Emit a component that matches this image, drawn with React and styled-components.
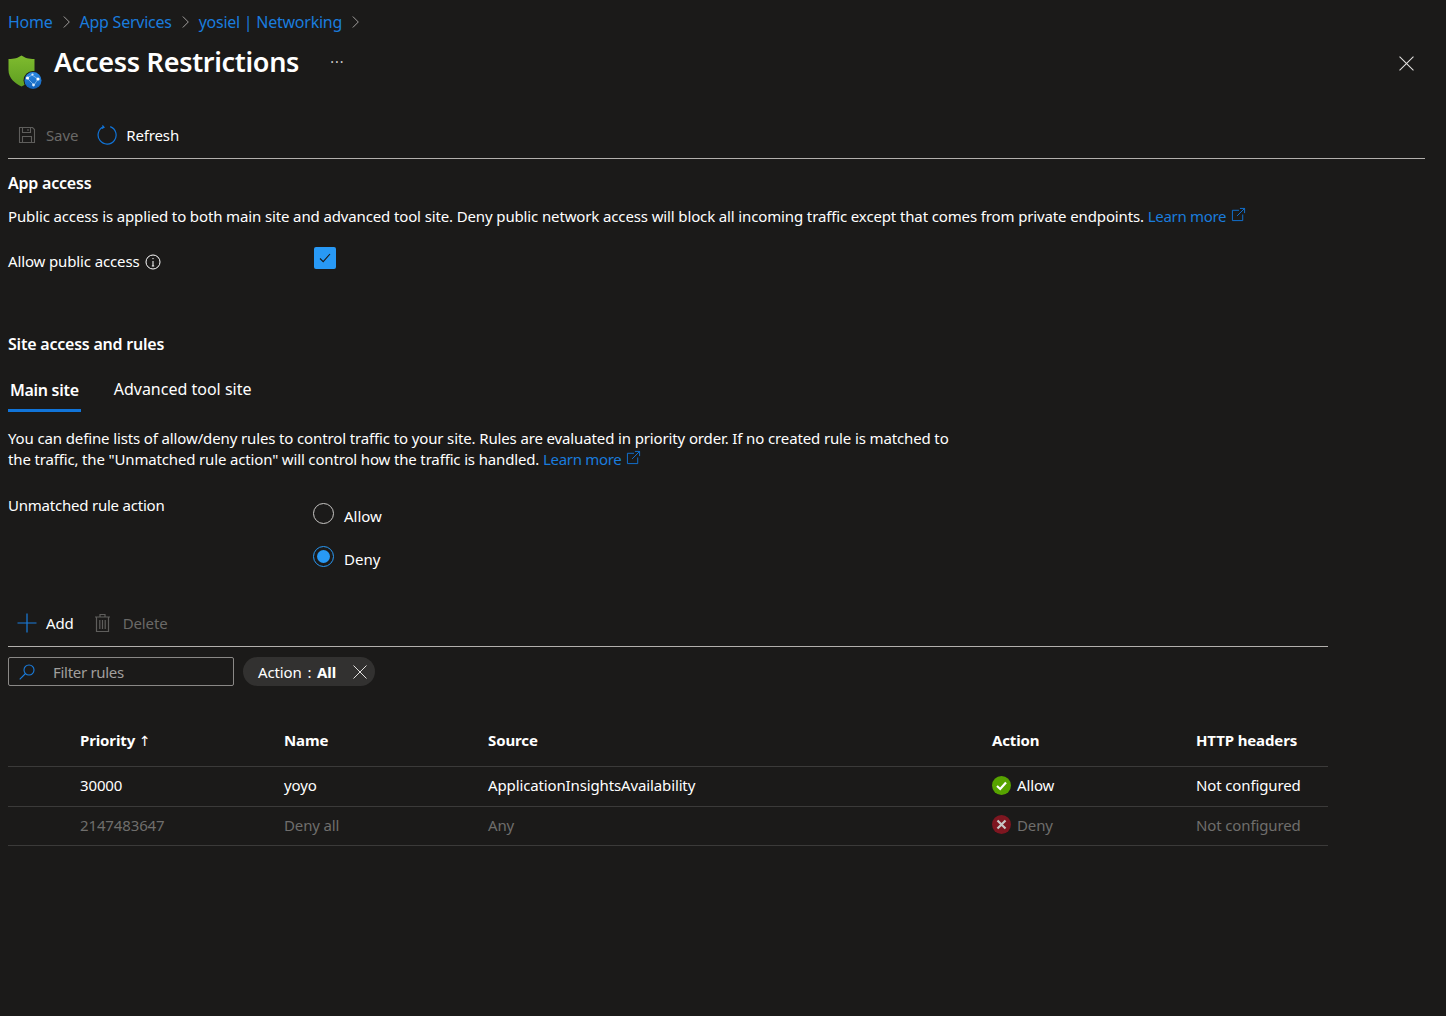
import React from "react";
import styled, { createGlobalStyle } from "styled-components";

const Global = createGlobalStyle`
  html, body { margin: 0; padding: 0; background: #1b1a19; }
  body {
    color: #fff;
    font-family: "Noto Sans", "Open Sans", sans-serif;
    font-size: 15px;
    letter-spacing: -0.13px;
  }
  #root { min-height: 100vh; }
`;

const ExternalIcon = () => (
  <LinkGlyph viewBox="0 0 16 16" fill="none" stroke="#1174d8" strokeWidth="1">
    <path d="M8.5 3.5H1.5v11h11V8" />
    <path d="M6.5 9.5L14.5 1.5M9.5 1.5h5v5" />
  </LinkGlyph>
);

const Chevron = () => (
  <svg width="7" height="14" viewBox="0 0 7 14" fill="none" stroke="#a19f9d" strokeWidth="1">
    <path d="M0.8 1.5L6.3 7L0.8 12.5" />
  </svg>
);

const ShieldLogo = () => (
  <svg width="36" height="36" viewBox="0 0 36 36">
    <defs>
      <linearGradient id="shield" x1="0" y1="0" x2="0" y2="1">
        <stop offset="0" stopColor="#7fbb2e" />
        <stop offset="1" stopColor="#5f9f22" />
      </linearGradient>
      <linearGradient id="globe" x1="0" y1="0" x2="0" y2="1">
        <stop offset="0" stopColor="#2b8be6" />
        <stop offset="1" stopColor="#1260b8" />
      </linearGradient>
    </defs>
    <path d="M13.5 0.5C17 3 20.5 4 26.5 4V15C26.5 23 20 28.5 13.5 31.5C7 28.5 0.5 23 0.5 15V4C6.5 4 10 3 13.5 0.5Z" fill="url(#shield)" />
    <circle cx="25" cy="25.5" r="9.5" fill="#1b1a19" />
    <circle cx="25" cy="25.5" r="8.5" fill="url(#globe)" />
    <path d="M19 23L24 20M24 20L30 24M19 23L26 30M30 24L26 30" stroke="#9ccbf5" strokeWidth="0.7" fill="none" />
    <circle cx="19.5" cy="23" r="1.6" fill="#fff" />
    <circle cx="30" cy="24" r="1.6" fill="#fff" />
    <circle cx="25.5" cy="30" r="1.4" fill="#dcecfb" />
    <circle cx="24.5" cy="19.5" r="1.1" fill="#dcecfb" />
  </svg>
);

const SaveIcon = () => (
  <svg width="18" height="18" viewBox="0 0 18 18" fill="none" stroke="#5f5e5c" strokeWidth="1.1">
    <path d="M1.5 1.5H14.5L16.5 3.5V16.5H1.5Z" />
    <path d="M4.5 1.5V6.5H12.5V1.5M10 3V5M4.5 16.5V10.5H13.5V16.5" />
  </svg>
);

const RefreshIcon = () => (
  <svg width="20" height="20" viewBox="0 0 20 20" fill="none" stroke="#1174d8" strokeWidth="1.2">
    <path d="M6.5 1.8A9 9 0 1 0 13.2 1.6" />
    <path d="M5.4 0.5L7 2.3L4.8 3.4" />
  </svg>
);

const PlusIcon = () => (
  <svg width="20" height="20" viewBox="0 0 20 20" stroke="#1a7cdd" strokeWidth="1.2">
    <path d="M10 0.5V19.5M0.5 10H19.5" />
  </svg>
);

const TrashIcon = () => (
  <svg width="17" height="20" viewBox="0 0 17 20" fill="none" stroke="#5f5e5c" strokeWidth="1.2">
    <path d="M1 4H16M6 4V1.5H11V4M2.5 4V18.5H14.5V4" />
    <path d="M5.8 7V16M8.5 7V16M11.2 7V16" />
  </svg>
);

const SearchIcon = () => (
  <svg width="16" height="16" viewBox="0 0 16 16" fill="none" stroke="#1a7cdd" strokeWidth="1.1">
    <circle cx="10" cy="6" r="5" />
    <path d="M6.5 9.5L0.7 15.3" />
  </svg>
);

const CloseIcon = ({ size = 14 }) => (
  <svg width={size} height={size} viewBox="0 0 14 14" stroke="#e1dfdd" strokeWidth="1">
    <path d="M0.5 0.5L13.5 13.5M13.5 0.5L0.5 13.5" />
  </svg>
);

const InfoIcon = () => (
  <InfoGlyph viewBox="0 0 16 16" fill="none" stroke="#fff" strokeWidth="1">
    <circle cx="8" cy="8" r="7" />
    <path d="M8 7V12M6.8 12H9.2" />
    <circle cx="8" cy="4.6" r="0.7" fill="#fff" stroke="none" />
  </InfoGlyph>
);

const StatusIcon = ({ allow }) => (
  <svg width="19" height="19" viewBox="0 0 19 19">
    <circle cx="9.5" cy="9.5" r="9.5" fill={allow ? "#57a300" : "#7e1620"} />
    {allow ? (
      <path d="M5 10L8.2 13L14 6.5" fill="none" stroke="#fff" strokeWidth="2.2" />
    ) : (
      <path d="M5.5 5.5L13.5 13.5M13.5 5.5L5.5 13.5" fill="none" stroke="#c9c8c7" strokeWidth="2.2" />
    )}
  </svg>
);

const RULES = [
  { priority: "30000", name: "yoyo", source: "ApplicationInsightsAvailability", action: "Allow", headers: "Not configured" },
  { priority: "2147483647", name: "Deny all", source: "Any", action: "Deny", headers: "Not configured", muted: true },
];

const App = () => {
  return (
    <Page>
      <Global />
      <Breadcrumb>
        <a>Home</a>
        <Chevron />
        <a>App Services</a>
        <Chevron />
        <a>yosiel | Networking</a>
        <Chevron />
      </Breadcrumb>

      <TitleRow>
        <TitleLogo>
          <ShieldLogo />
        </TitleLogo>
        <Title>Access Restrictions</Title>
        <Ellipsis>···</Ellipsis>
        <CloseButton>
          <CloseIcon size={15} />
        </CloseButton>
      </TitleRow>

      <Toolbar $width="1417px" $top="18px" $left="10px" $gap="19px">
        <ToolButton $disabled $gap="10px">
          <SaveIcon />
          Save
        </ToolButton>
        <ToolButton>
          <RefreshIcon />
          Refresh
        </ToolButton>
      </Toolbar>

      <SectionTitle $top="13px">App access</SectionTitle>
      <Paragraph $top="12px">
        Public access is applied to both main site and advanced tool site. Deny public network access will block all
        incoming traffic except that comes from private endpoints. <LearnMore>Learn more</LearnMore>
        <ExternalIcon />
      </Paragraph>

      <FieldRow $top="19px">
        <FieldLabel>
          Allow public access <InfoIcon />
        </FieldLabel>
        <Checkbox>
          <svg width="12" height="10" viewBox="0 0 12 10" fill="none" stroke="#1b1a19" strokeWidth="1.1">
            <path d="M1 5.5L4.2 8.7L11 1" />
          </svg>
        </Checkbox>
      </FieldRow>

      <SectionTitle $top="58px">Site access and rules</SectionTitle>

      <Tabs>
        <Tab $active>Main site</Tab>
        <Tab>Advanced tool site</Tab>
      </Tabs>

      <Paragraph $top="16px" $width="960px">
        You can define lists of allow/deny rules to control traffic to your site. Rules are evaluated in priority order.
        If no created rule is matched to
        <br />
        <TightLine>the traffic, the "Unmatched rule action" will control how the traffic is handled. </TightLine>
        <LearnMore>Learn more</LearnMore>
        <ExternalIcon />
      </Paragraph>

      <RadioField>
        <FieldLabel>Unmatched rule action</FieldLabel>
        <RadioGroup>
          <RadioOption>
            <Radio />
            <span>Allow</span>
          </RadioOption>
          <RadioOption>
            <Radio $checked />
            <span>Deny</span>
          </RadioOption>
        </RadioGroup>
      </RadioField>

      <Toolbar $width="1320px" $top="37px" $left="9px" $gap="20px">
        <ToolButton>
          <PlusIcon />
          Add
        </ToolButton>
        <ToolButton $disabled $gap="12px">
          <TrashIcon />
          Delete
        </ToolButton>
      </Toolbar>

      <FilterRow>
        <FilterInput>
          <SearchIcon />
          <span>Filter rules</span>
        </FilterInput>
        <FilterPill>
          <span>
            Action : <b>All</b>
          </span>
          <CloseIcon />
        </FilterPill>
      </FilterRow>

      <RulesTable>
        <thead>
          <tr>
            <th />
            <th>
              Priority <SortArrow>↑</SortArrow>
            </th>
            <th>Name</th>
            <th>Source</th>
            <th>Action</th>
            <th>HTTP headers</th>
          </tr>
        </thead>
        <tbody>
          {RULES.map((rule) => (
            <RuleRow key={rule.priority} $muted={rule.muted}>
              <td />
              <td>{rule.priority}</td>
              <td>{rule.name}</td>
              <td>{rule.source}</td>
              <td>
                <ActionCell>
                  <StatusIcon allow={rule.action === "Allow"} />
                  {rule.action}
                </ActionCell>
              </td>
              <td>{rule.headers}</td>
            </RuleRow>
          ))}
        </tbody>
      </RulesTable>
    </Page>
  );
};

export default App;

const Page = styled.div`
  box-sizing: border-box;
  width: 1446px;
  min-height: 1016px;
  padding: 12px 0 0 8px;
  background: #1b1a19;
`;

const Breadcrumb = styled.nav`
  display: flex;
  align-items: center;
  gap: 10px;
  height: 20px;
  font-size: 16px;
  letter-spacing: -0.25px;

  a {
    color: #1a7cdd;
  }
`;

const TitleRow = styled.div`
  display: flex;
  align-items: flex-start;
  height: 56px;
  margin-top: 10px;
  width: 1417px;
`;

const TitleLogo = styled.div`
  width: 46px;
  height: 36px;
  margin-top: 13px;
`;

const Title = styled.h1`
  margin: 0;
  font-size: 27px;
  line-height: 40px;
  font-weight: 600;
  letter-spacing: -0.3px;
`;

const Ellipsis = styled.div`
  margin-left: 31px;
  line-height: 40px;
  font-size: 14px;
  letter-spacing: 1px;
  color: #d2d0ce;
`;

const CloseButton = styled.div`
  margin-left: auto;
  padding: 13px 11px 0 0;
`;

const Toolbar = styled.div`
  display: flex;
  align-items: center;
  gap: ${(p) => p.$gap};
  box-sizing: border-box;
  width: ${(p) => p.$width};
  height: 43px;
  margin-top: ${(p) => p.$top};
  padding: 0 0 5px ${(p) => p.$left};
  border-bottom: 1px solid #b3b0ad;
`;

const ToolButton = styled.div`
  display: flex;
  align-items: center;
  gap: ${(p) => p.$gap || "9px"};
  color: ${(p) => (p.$disabled ? "#6a6967" : "#fff")};
`;

const SectionTitle = styled.h2`
  margin: ${(p) => p.$top} 0 0;
  font-size: 16px;
  line-height: 22px;
  font-weight: 600;
  letter-spacing: -0.22px;
`;

const Paragraph = styled.p`
  margin: ${(p) => p.$top} 0 0;
  width: ${(p) => p.$width || "auto"};
  line-height: 21px;
`;

const TightLine = styled.span`
  letter-spacing: -0.155px;
`;

const LearnMore = styled.a`
  color: #1a7cdd;
  letter-spacing: -0.3px;
`;

const LinkGlyph = styled.svg`
  width: 15px;
  height: 15px;
  margin-left: 5px;
  vertical-align: 0;
`;

const InfoGlyph = styled.svg`
  width: 16px;
  height: 16px;
  margin-left: 2px;
  vertical-align: -3px;
`;

const FieldRow = styled.div`
  display: grid;
  grid-template-columns: 306px auto;
  justify-content: start;
  margin-top: ${(p) => p.$top};
`;

const FieldLabel = styled.div`
  line-height: 28px;
  margin-top: 1px;
`;

const Checkbox = styled.div`
  display: flex;
  align-items: center;
  justify-content: center;
  width: 22px;
  height: 22px;
  border-radius: 2px;
  background: #2899f5;
  margin-top: 1px;
`;

const Tabs = styled.div`
  display: flex;
  gap: 35px;
  margin-top: 20px;
  padding-left: 2px;
  height: 37px;
`;

const Tab = styled.div`
  position: relative;
  font-size: 16px;
  line-height: 28px;
  font-weight: ${(p) => (p.$active ? 600 : 400)};
  letter-spacing: ${(p) => (p.$active ? "-0.3px" : "0")};
  padding-top: ${(p) => (p.$active ? "1px" : "0")};

  ${(p) =>
    p.$active &&
    `
    &::after {
      content: "";
      position: absolute;
      left: -2px;
      right: -2px;
      bottom: 0;
      height: 3px;
      background: #1174d8;
    }
  `}
`;

const RadioField = styled.div`
  display: grid;
  grid-template-columns: 305px auto;
  justify-content: start;
  margin-top: 20px;
  letter-spacing: -0.22px;
`;

const RadioGroup = styled.div`
  display: flex;
  flex-direction: column;
  gap: 21px;
  margin-top: 12px;
  letter-spacing: 0;
`;

const RadioOption = styled.div`
  display: flex;
  align-items: center;
  gap: 10px;
  height: 22px;

  span {
    padding-top: 6px;
  }
`;

const Radio = styled.div`
  box-sizing: border-box;
  width: 21px;
  height: 21px;
  border-radius: 50%;
  border: 1px solid ${(p) => (p.$checked ? "#2899f5" : "#c8c6c4")};
  display: flex;
  align-items: center;
  justify-content: center;

  &::after {
    content: "";
    display: ${(p) => (p.$checked ? "block" : "none")};
    width: 13px;
    height: 13px;
    border-radius: 50%;
    background: #2899f5;
  }
`;

const FilterRow = styled.div`
  display: flex;
  align-items: center;
  gap: 9px;
  margin-top: 10px;
`;

const FilterInput = styled.div`
  box-sizing: border-box;
  display: flex;
  align-items: center;
  gap: 18px;
  width: 226px;
  height: 29px;
  padding-left: 10px;
  border: 1px solid #8a8886;
  border-radius: 2px;
  color: #a19f9d;
  letter-spacing: -0.3px;
`;

const FilterPill = styled.div`
  display: flex;
  align-items: center;
  gap: 17px;
  box-sizing: border-box;
  height: 29px;
  padding: 0 8px 0 15px;
  border-radius: 15px;
  background: #323130;
  word-spacing: 2px;

  b {
    font-weight: 700;
  }
`;

const RulesTable = styled.table`
  width: 1320px;
  margin-top: 28px;
  border-collapse: collapse;
  table-layout: fixed;

  th,
  td {
    padding: 0;
    text-align: left;
  }

  th {
    height: 52px;
    font-weight: 700;
    border-bottom: 1px solid #3b3a39;
  }

  th:nth-child(1) {
    width: 72px;
  }
  th:nth-child(2),
  th:nth-child(3),
  th:nth-child(5) {
    width: 204px;
  }
  th:nth-child(4) {
    width: 504px;
  }

  tbody tr:first-child td {
    height: 40px;
  }
`;

const SortArrow = styled.span`
  font-family: "DejaVu Sans", sans-serif;
  font-size: 14px;
  font-weight: 400;
`;

const RuleRow = styled.tr`
  color: ${(p) => (p.$muted ? "#6f6e6c" : "#fff")};

  td {
    height: 39px;
    padding-bottom: 3px;
    box-sizing: border-box;
    border-bottom: 1px solid #3b3a39;
  }
`;

const ActionCell = styled.div`
  display: flex;
  align-items: center;
  gap: 6px;
`;
